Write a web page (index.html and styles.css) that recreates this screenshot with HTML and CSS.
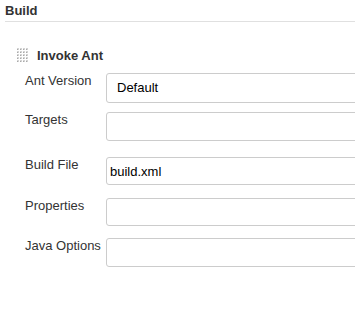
FILE: index.html
```html
<!DOCTYPE html>
<html>
<head>
<meta charset="utf-8">
<link rel="stylesheet" href="styles.css">
</head>
<body>
<div class="page">
  <div class="section-header">Build</div>
  <div class="step">
    <div class="step-title">
      <svg class="grip" width="12" height="15" viewBox="0 0 12 15">
        <defs>
          <pattern id="g" x="0" y="0" width="3" height="3" patternUnits="userSpaceOnUse">
            <rect x="0" y="0" width="2" height="2" fill="#d4d4d4"/>
            <rect x="0" y="1" width="1" height="1" fill="#a9a9a9"/>
          </pattern>
        </defs>
        <rect x="0" y="0" width="12" height="15" fill="url(#g)"/>
      </svg>
      <span>Invoke Ant</span>
    </div>
    <div class="form">
      <div class="row r1">
        <label class="lbl">Ant Version</label>
        <div class="field select">Default</div>
      </div>
      <div class="row r2">
        <label class="lbl">Targets</label>
        <div class="field text h29"></div>
      </div>
      <div class="row r3">
        <label class="lbl">Build File</label>
        <div class="field text h28">build.xml</div>
      </div>
      <div class="row r4">
        <label class="lbl">Properties</label>
        <div class="field text h28"></div>
      </div>
      <div class="row r5">
        <label class="lbl">Java Options</label>
        <div class="field text h29"></div>
      </div>
    </div>
  </div>
</div>
</body>
</html>
```

FILE: styles.css
```css
html, body {
  margin: 0;
  padding: 0;
  background: #fff;
  overflow: hidden;
}
.page {
  width: 355px;
  height: 309px;
  overflow: hidden;
  font-family: "Liberation Sans", Arial, sans-serif;
  font-size: 13px;
  color: #333;
}
.section-header {
  margin-left: 5px;
  padding-top: 3px;
  height: 18px;
  line-height: 15px;
  font-weight: bold;
  color: #333;
  border-bottom: 1px solid #e0e0e0;
}
.step {
  padding-top: 25px;
}
.step-title {
  display: flex;
  align-items: center;
  height: 16px;
  padding-left: 17px;
  font-weight: bold;
  color: #333;
}
.grip {
  display: block;
  margin-right: 8px;
}
.form {
  padding-top: 10px;
  padding-left: 25px;
}
.row {
  display: flex;
  align-items: flex-start;
}
.lbl {
  width: 81px;
  flex: none;
  padding-top: 1px;
  line-height: 13px;
  color: #333;
}
.field {
  flex: none;
  width: 320px;
  box-sizing: border-box;
  border: 1px solid #ccc;
  border-radius: 3px;
  background: #fff;
  color: #000;
  line-height: 15px;
}
.select {
  height: 30px;
  padding: 6px 0 0 10px;
}
.text {
  padding: 6px 0 0 3px;
}
.h28 { height: 28px; }
.h29 { height: 29px; }
.r1 { margin-bottom: 9px; }
.r2 { margin-bottom: 16px; }
.r3 { margin-bottom: 13px; }
.r4 { margin-bottom: 12px; }
```
